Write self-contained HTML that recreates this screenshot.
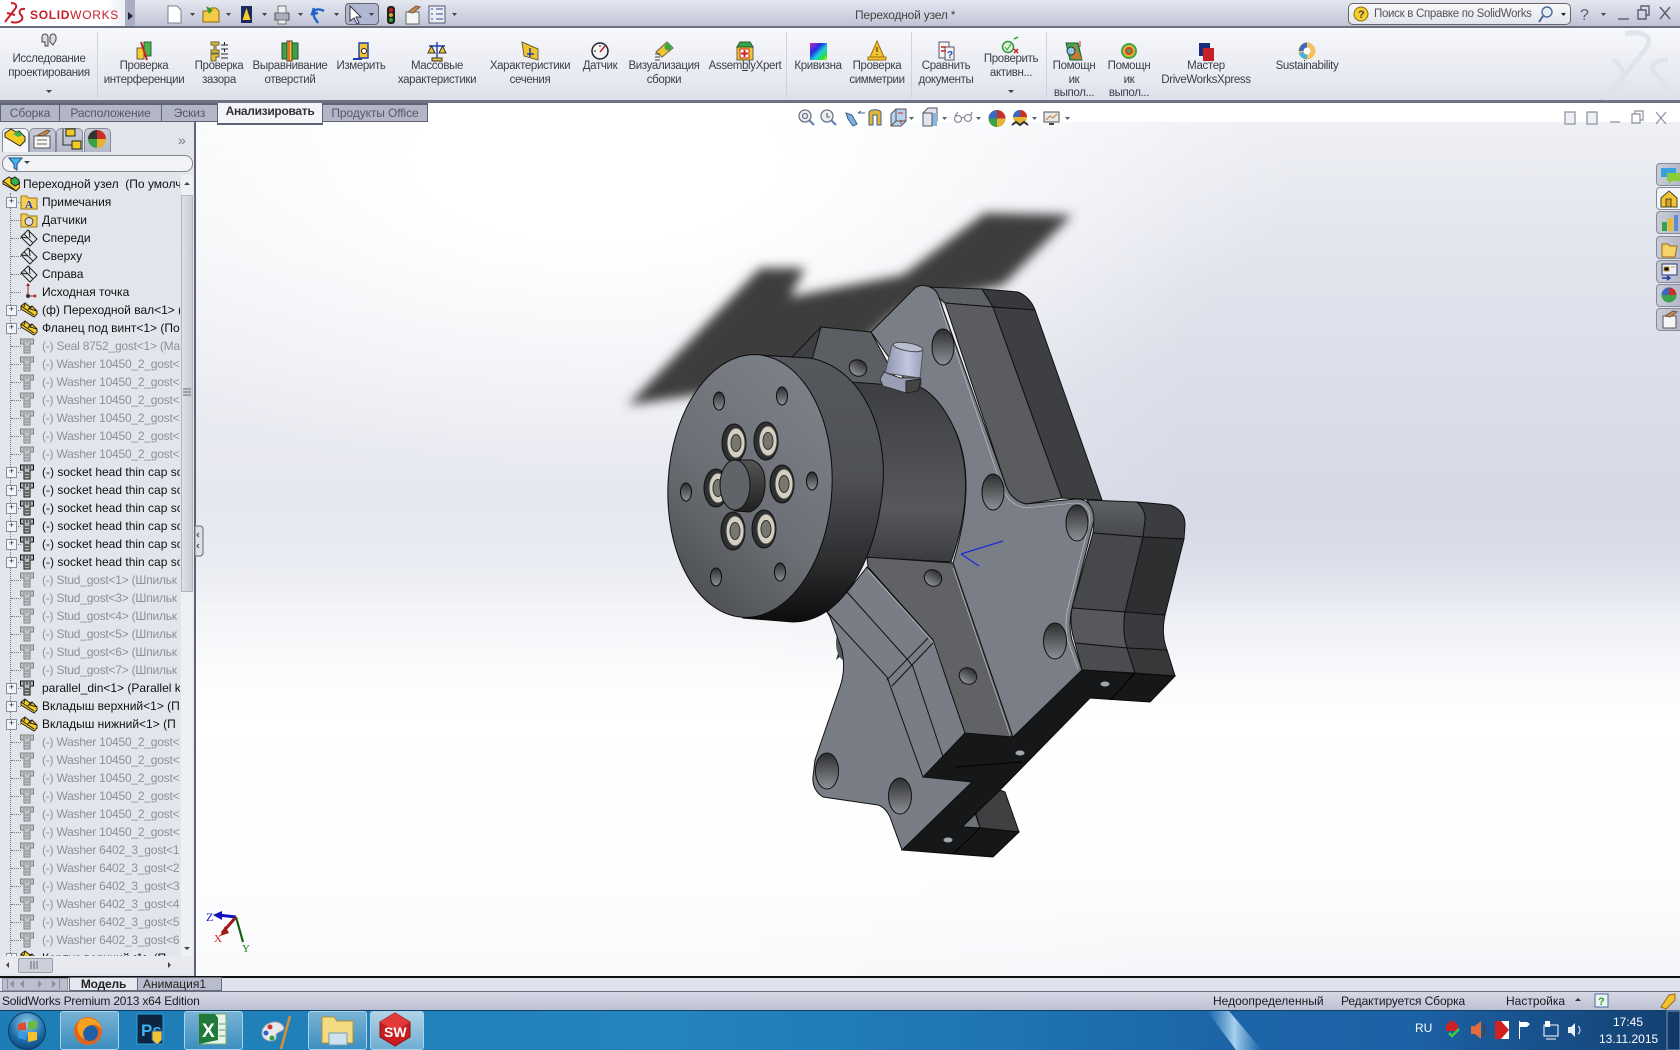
<!DOCTYPE html>
<html><head><meta charset="utf-8"><style>
*{box-sizing:border-box}
html,body{margin:0;padding:0;width:1680px;height:1050px;overflow:hidden;font-family:"Liberation Sans","Noto Sans CJK JP",sans-serif;font-size:12px;background:#fff}
.a{position:absolute}
#title{left:0;top:0;width:1680px;height:28px;background:linear-gradient(#e6e8f1,#c0c4d5);border-bottom:2px solid #6a6f80}
#logo{left:0;top:0;width:125px;height:26px;background:linear-gradient(90deg,#fff 85%,#eceef4)}
#arrowbox{left:125px;top:0;width:10px;height:26px;background:#a9adc4}
#ttl{left:855px;top:8px;font-size:12px;color:#444;white-space:nowrap;letter-spacing:-.2px}
#search{left:1348px;top:3px;width:223px;height:22px;border:1px solid #666;border-radius:5px;background:linear-gradient(#f8f8fb,#e3e5ee)}
#search span{position:absolute;left:25px;top:4px;font-size:11.5px;letter-spacing:-.3px;color:#555;white-space:nowrap}
#rib{left:0;top:28px;width:1680px;height:74px;background:linear-gradient(#f7f8fb,#e7e9f1 70%,#dcdfe9)}
#ribb{left:0;top:100px;width:1680px;height:3px;background:#6e7282}
.l{position:absolute;transform:translateX(-50%);text-align:center;font-size:11.5px;letter-spacing:-.35px;line-height:13.5px;color:#3b3e4c;white-space:nowrap}
.sep{position:absolute;top:32px;height:66px;width:1px;background:#cfd2dd}
.tab{position:absolute;top:103px;height:19px;background:#b3b6c6;border:1px solid #5f6474;border-top:2px solid #5f6474;color:#555964;font-size:12px;letter-spacing:-.1px;text-align:center;line-height:16px;white-space:nowrap}
#vp{left:196px;top:122px;width:1484px;height:854px;background:radial-gradient(ellipse 700px 320px at 400px 40px,rgba(255,255,255,1) 25%,rgba(255,255,255,0) 100%),linear-gradient(90deg,rgba(255,255,255,.4) 0,rgba(255,255,255,.4) 560px,rgba(255,255,255,0) 1000px),linear-gradient(#eef0f5 0,#e0e2ec 163px,#d6d9e6 381px,#dcdfea 440px,#eef0f5 500px,#fbfbfd 560px,#fff 600px,#fdfdfe 760px,#f5f6f9 854px)}
#panel{left:0;top:122px;width:196px;height:854px;background:#e3e5ed;border-right:2px solid #5f6474}
.ptab{position:absolute;top:128px;width:27px;height:24px;background:linear-gradient(#c9ccd8,#b4b8c8);border:1px solid #858a9a;border-bottom:0;border-radius:5px 5px 0 0}
#filter{left:2px;top:155px;width:191px;height:17px;border:1px solid #888;border-radius:8px;background:#f2f3f7}
#tree{left:0;top:175px;width:180px;height:781px;overflow:hidden}
#vl{left:10px;top:193px;height:762px;width:1px;border-left:1px dotted #777}
.r{position:relative;height:18px;line-height:18px;padding-left:42px;white-space:nowrap;overflow:hidden;color:#111;font-size:12px}
.r::before{content:"";position:absolute;left:11px;top:9px;width:10px;border-top:1px dotted #777}
.p::after{content:"+";position:absolute;left:6px;top:4px;width:9px;height:9px;border:1px solid #8a8f9f;background:#f4f5f8;font-size:9px;line-height:7px;text-align:center;color:#223}
.g{color:#8f9094;letter-spacing:-.22px}
.r svg{position:absolute;left:20px;top:0;width:18px;height:18px}
.r.z{padding-left:23px}.r.z::before{display:none}.r.z svg{left:2px}
#vsb{left:181px;top:175px;width:12px;height:781px;background:#eef0f4}
#vth{left:181px;top:195px;width:12px;height:397px;background:linear-gradient(90deg,#e0e2e8,#c9ccd4);border:1px solid #b3b6c0}
#hsb{left:0;top:956px;width:193px;height:18px;background:#e8eaf0}
#hth{left:18px;top:958px;width:35px;height:15px;background:#ccd0da;border:1px solid #999eab;border-radius:2px}
#botab{left:0;top:976px;width:1680px;height:16px;background:#e0e3ec;border-top:2px solid #111;border-bottom:1px solid #6a6f80}
#navb{left:2px;top:978px;width:66px;height:13px;background:#bcbfce;border:1px solid #9699a8}
.bt{position:absolute;top:977px;height:14px;font-size:12px;text-align:center;line-height:13px;color:#222;border:1px solid #666b7c}
#status{left:0;top:992px;width:1680px;height:18px;background:linear-gradient(#d6d9e5,#bcc0d1);color:#1a1a22;font-size:12px;line-height:17px}
#status span{position:absolute;top:1px;white-space:nowrap}
#tb{left:0;top:1010px;width:1680px;height:40px;background:linear-gradient(90deg,#1e7db6 0,#2484bc 40%,#1f74b1 60%,#1c66a8 72%,#1c62a6 84%,#143f70 100%);border-top:1px solid #0e3f68}
.tk{position:absolute;top:1011px;height:39px;border:1px solid #a9d3ea;border-radius:3px;background:linear-gradient(rgba(255,255,255,.4),rgba(255,255,255,.12))}
.w{position:absolute;color:#fff;font-size:12px;white-space:nowrap}
.rt{position:absolute;left:1656px;width:24px;height:23px;background:linear-gradient(90deg,#c9ccd8,#b4b8c8);border:1px solid #868b9a;border-right:0;border-radius:4px 0 0 4px}
</style></head><body>
<div class="a" id="vp"></div>
<div class="a" id="title"></div><div class="a" id="logo"></div><div class="a" id="arrowbox"></div>
<div class="a" style="left:30px;top:9px;color:#c8202a;font-size:12px;line-height:13px;font-weight:bold;letter-spacing:.7px;white-space:nowrap">SOLID<span style="font-weight:normal">WORKS</span></div>
<div class="a" id="ttl">Переходной узел *</div>
<div class="a" id="search"><span>Поиск в Справке по SolidWorks</span></div>
<div class="a" style="left:345px;top:3px;width:34px;height:22px;background:#b1b6d2;border:1px solid #666;border-radius:4px"></div>
<div class="a" id="rib"></div><div class="a" id="ribb"></div>
<div class="sep" style="left:97px"></div><div class="sep" style="left:786px"></div><div class="sep" style="left:911px"></div><div class="sep" style="left:1046px"></div>
<div class="l" style="left:49px;top:53px">Исследование<br>проектирования</div>
<div class="l" style="left:144px;top:60px">Проверка<br>интерференции</div>
<div class="l" style="left:219px;top:60px">Проверка<br>зазора</div>
<div class="l" style="left:290px;top:60px">Выравнивание<br>отверстий</div>
<div class="l" style="left:361px;top:60px">Измерить</div>
<div class="l" style="left:437px;top:60px">Массовые<br>характеристики</div>
<div class="l" style="left:530px;top:60px">Характеристики<br>сечения</div>
<div class="l" style="left:600px;top:60px">Датчик</div>
<div class="l" style="left:664px;top:60px">Визуализация<br>сборки</div>
<div class="l" style="left:745px;top:60px">Assem<u>b</u>lyXpert</div>
<div class="l" style="left:818px;top:60px">Кривизна</div>
<div class="l" style="left:877px;top:60px">Проверка<br>симметрии</div>
<div class="l" style="left:946px;top:60px">Сравнить<br>документы</div>
<div class="l" style="left:1011px;top:53px">Проверить<br>активн...</div>
<div class="l" style="left:1074px;top:60px">Помощн<br>ик<br>выпол...</div>
<div class="l" style="left:1129px;top:60px">Помощн<br>ик<br>выпол...</div>
<div class="l" style="left:1206px;top:60px">Мастер<br>DriveWorksXpress</div>
<div class="l" style="left:1307px;top:60px">Sustainability</div>
<div class="tab" style="left:0;width:60px">Сборка</div>
<div class="tab" style="left:59px;width:103px">Расположение</div>
<div class="tab" style="left:161px;width:57px">Эскиз</div>
<div class="tab" style="left:217px;width:106px;height:22px;background:#f4f5f8;color:#333;font-weight:bold;border-top:0;border-bottom:2px solid #5f6474;letter-spacing:-.3px">Анализировать</div>
<div class="tab" style="left:322px;width:106px">Продукты Office</div>
<div class="a" id="panel"></div>
<div class="ptab" style="left:2px;background:#f4f5f8"></div><div class="ptab" style="left:29px"></div><div class="ptab" style="left:56px"></div><div class="ptab" style="left:84px"></div>
<div class="a" id="filter"></div>
<div class="a" style="left:178px;top:133px;color:#777;font-size:14px;line-height:14px">»</div>
<div class="a" id="vl"></div>
<svg width="0" height="0" style="position:absolute"><defs>
<symbol id="sg" viewBox="0 0 18 18"><path d="M.5 2h13v5H10v9H4V7H.5z" fill="#c2c3c5" stroke="#808184"/><path d="M4 3v3M7 3v3M10 3v3M5 10h4M5 13h4" stroke="#88898c"/></symbol>
<symbol id="sk" viewBox="0 0 18 18"><path d="M.5 2h13v5H10v9H4V7H.5z" fill="#b5b6ba" stroke="#111"/><path d="M4 3v3M7 3v3M10 3v3M5 10h4M5 13h4" stroke="#111"/></symbol>
<symbol id="as" viewBox="0 0 18 18"><path d="M1 5l4-3 5 4 2-1 5 5v3l-3 3L1 8z" fill="#f5cc22" stroke="#222"/><path d="M1 5l13 9M5 2l-1 4M10 6l-2 3M12 5l-2 3 7 2" stroke="#222" fill="none"/></symbol>
<symbol id="rt" viewBox="0 0 18 18"><path d="M1 6l6-4 5 3 3-1 3 4v4l-4 4L1 9z" fill="#f5cc22" stroke="#222"/><path d="M9 4l4-2 4 3v4l-4 2-4-3z" fill="#35b04a" stroke="#222"/><path d="M1 6l12 9" stroke="#222" fill="none"/></symbol>
<symbol id="pl" viewBox="0 0 18 18"><path d="M1 8l7-7 9 9-7 7zM4 5l9 9M1 8l7 1M9 1l1 8" fill="none" stroke="#222"/></symbol>
</defs></svg>
<div class="a" id="tree">
<div class="r z"><svg><use href="#rt"/></svg>Переходной узел&nbsp; (По умолч</div>
<div class="r p"><svg viewBox="0 0 18 18"><path d="M1 3h6l1 2h9v11H1z" fill="#f5cf55" stroke="#9a7a1a"/><text x="5" y="15" font-size="11" font-weight="bold" fill="#1a3fc0" font-family="Liberation Serif">A</text></svg>Примечания</div>
<div class="r"><svg viewBox="0 0 18 18"><path d="M1 3h6l1 2h9v11H1z" fill="#f5cf55" stroke="#9a7a1a"/><circle cx="9" cy="10.500" r="4" fill="#ddd" stroke="#444"/></svg>Датчики</div>
<div class="r"><svg><use href="#pl"/></svg>Спереди</div>
<div class="r"><svg><use href="#pl"/></svg>Сверху</div>
<div class="r"><svg><use href="#pl"/></svg>Справа</div>
<div class="r"><svg viewBox="0 0 18 18"><path d="M8 13V2M8 13h8" stroke="#b01818" fill="none"/><path d="M6 3l2-3 2 3zM14 11l3 2-3 2z" fill="#b01818"/><circle cx="8" cy="13" r="2" fill="#333"/></svg>Исходная точка</div>
<div class="r p"><svg><use href="#as"/></svg>(ф) Переходной вал&lt;1&gt; (</div>
<div class="r p"><svg><use href="#as"/></svg>Фланец под винт&lt;1&gt; (По</div>
<div class="r g"><svg><use href="#sg"/></svg>(-) Seal 8752_gost&lt;1&gt; (Ma</div>
<div class="r g"><svg><use href="#sg"/></svg>(-) Washer 10450_2_gost&lt;3</div>
<div class="r g"><svg><use href="#sg"/></svg>(-) Washer 10450_2_gost&lt;4</div>
<div class="r g"><svg><use href="#sg"/></svg>(-) Washer 10450_2_gost&lt;5</div>
<div class="r g"><svg><use href="#sg"/></svg>(-) Washer 10450_2_gost&lt;6</div>
<div class="r g"><svg><use href="#sg"/></svg>(-) Washer 10450_2_gost&lt;7</div>
<div class="r g"><svg><use href="#sg"/></svg>(-) Washer 10450_2_gost&lt;8</div>
<div class="r p"><svg><use href="#sk"/></svg>(-) socket head thin cap sc</div>
<div class="r p"><svg><use href="#sk"/></svg>(-) socket head thin cap sc</div>
<div class="r p"><svg><use href="#sk"/></svg>(-) socket head thin cap sc</div>
<div class="r p"><svg><use href="#sk"/></svg>(-) socket head thin cap sc</div>
<div class="r p"><svg><use href="#sk"/></svg>(-) socket head thin cap sc</div>
<div class="r p"><svg><use href="#sk"/></svg>(-) socket head thin cap sc</div>
<div class="r g"><svg><use href="#sg"/></svg>(-) Stud_gost&lt;1&gt; (Шпильк</div>
<div class="r g"><svg><use href="#sg"/></svg>(-) Stud_gost&lt;3&gt; (Шпильк</div>
<div class="r g"><svg><use href="#sg"/></svg>(-) Stud_gost&lt;4&gt; (Шпильк</div>
<div class="r g"><svg><use href="#sg"/></svg>(-) Stud_gost&lt;5&gt; (Шпильк</div>
<div class="r g"><svg><use href="#sg"/></svg>(-) Stud_gost&lt;6&gt; (Шпильк</div>
<div class="r g"><svg><use href="#sg"/></svg>(-) Stud_gost&lt;7&gt; (Шпильк</div>
<div class="r p"><svg><use href="#sk"/></svg>parallel_din&lt;1&gt; (Parallel k</div>
<div class="r p"><svg><use href="#as"/></svg>Вкладыш верхний&lt;1&gt; (П</div>
<div class="r p"><svg><use href="#as"/></svg>Вкладыш нижний&lt;1&gt; (П</div>
<div class="r g"><svg><use href="#sg"/></svg>(-) Washer 10450_2_gost&lt;9</div>
<div class="r g"><svg><use href="#sg"/></svg>(-) Washer 10450_2_gost&lt;1</div>
<div class="r g"><svg><use href="#sg"/></svg>(-) Washer 10450_2_gost&lt;1</div>
<div class="r g"><svg><use href="#sg"/></svg>(-) Washer 10450_2_gost&lt;1</div>
<div class="r g"><svg><use href="#sg"/></svg>(-) Washer 10450_2_gost&lt;1</div>
<div class="r g"><svg><use href="#sg"/></svg>(-) Washer 10450_2_gost&lt;1</div>
<div class="r g"><svg><use href="#sg"/></svg>(-) Washer 6402_3_gost&lt;1:</div>
<div class="r g"><svg><use href="#sg"/></svg>(-) Washer 6402_3_gost&lt;2:</div>
<div class="r g"><svg><use href="#sg"/></svg>(-) Washer 6402_3_gost&lt;3:</div>
<div class="r g"><svg><use href="#sg"/></svg>(-) Washer 6402_3_gost&lt;4:</div>
<div class="r g"><svg><use href="#sg"/></svg>(-) Washer 6402_3_gost&lt;5:</div>
<div class="r g"><svg><use href="#sg"/></svg>(-) Washer 6402_3_gost&lt;6:</div>
<div class="r p"><svg><use href="#as"/></svg>Корпус верхний&lt;1&gt; (П</div>
</div>
<div class="a" id="vsb"></div><div class="a" id="vth"></div>
<div class="a" id="hsb"></div><div class="a" id="hth"></div>
<div class="rt" style="top:163px"></div><div class="rt" style="top:187px;background:#f3f4f7"></div><div class="rt" style="top:211px"></div><div class="rt" style="top:236px"></div><div class="rt" style="top:260px"></div><div class="rt" style="top:284px"></div><div class="rt" style="top:308px"></div>
<div class="a" id="botab"></div><div class="a" id="navb"></div>
<div class="bt" style="left:69px;width:69px;background:#e6e8f0;font-weight:bold;letter-spacing:-.2px">Модель</div>
<div class="bt" style="left:137px;width:85px;background:#b9bccc;text-align:left;padding-left:5px">Анимация1</div>
<div class="a" id="status"><span style="left:2px;letter-spacing:-.2px">SolidWorks Premium 2013 x64 Edition</span><span style="left:1213px">Недоопределенный</span><span style="left:1341px;letter-spacing:-.1px">Редактируется Сборка</span><span style="left:1506px">Настройка</span></div>
<div class="a" id="tb"></div>
<div class="tk" style="left:60px;width:59px"></div><div class="tk" style="left:184px;width:59px"></div><div class="tk" style="left:308px;width:59px"></div><div class="tk" style="left:370px;width:54px;background:linear-gradient(rgba(255,255,255,.65),rgba(255,255,255,.35))"></div>
<div class="w" style="left:1415px;top:1021px">RU</div>
<div class="w" style="left:1613px;top:1015px">17:45</div>
<div class="w" style="left:1599px;top:1032px">13.11.2015</div>

<svg class="a" style="left:0;top:0;pointer-events:none" width="1680" height="1050" viewBox="0 0 1680 1050" font-family="Liberation Sans, sans-serif">
<defs>
<filter id="bl" x="-20%" y="-20%" width="140%" height="140%"><feGaussianBlur stdDeviation="5.5"/></filter>
<linearGradient id="hole" x1="0" y1="0" x2="0" y2="1"><stop offset="0" stop-color="#2c2d2f"/><stop offset="1" stop-color="#8d9095"/></linearGradient>
<linearGradient id="cyl" gradientUnits="userSpaceOnUse" x1="0" y1="382" x2="0" y2="562"><stop offset="0" stop-color="#3c3e41"/><stop offset=".7" stop-color="#56585c"/><stop offset="1" stop-color="#3a3c3f"/></linearGradient>
<linearGradient id="fl" gradientUnits="userSpaceOnUse" x1="0" y1="355" x2="0" y2="622"><stop offset="0" stop-color="#55585c"/><stop offset=".45" stop-color="#4f5155"/><stop offset=".75" stop-color="#2f3032"/><stop offset="1" stop-color="#0d0d0e"/></linearGradient>
<linearGradient id="ff" x1=".75" y1=".05" x2=".25" y2="1"><stop offset="0" stop-color="#7c8088"/><stop offset=".55" stop-color="#6c6f75"/><stop offset="1" stop-color="#4c4e51"/></linearGradient>
<linearGradient id="bolt" x1="0" y1="0" x2="1" y2="0"><stop offset="0" stop-color="#8e93ad"/><stop offset=".6" stop-color="#c2c8e0"/><stop offset="1" stop-color="#9a9fb8"/></linearGradient>
<linearGradient id="pin" gradientUnits="userSpaceOnUse" x1="0" y1="460" x2="0" y2="511"><stop offset="0" stop-color="#555"/><stop offset="1" stop-color="#222"/></linearGradient>
<linearGradient id="sw" x1="0" y1="0" x2="1" y2="0"><stop offset="0" stop-color="#7db4e0" stop-opacity="0"/><stop offset=".5" stop-color="#a8d2f0"/><stop offset="1" stop-color="#7db4e0" stop-opacity="0"/></linearGradient>
<radialGradient id="orb" cx=".5" cy=".3" r=".8"><stop offset="0" stop-color="#8fd0ee"/><stop offset=".6" stop-color="#1a6aa8"/><stop offset="1" stop-color="#0c3a68"/></radialGradient>
<linearGradient id="dk" x1="0" y1="0" x2="0" y2="1"><stop offset="0" stop-color="#5e6166"/><stop offset="1" stop-color="#46484b"/></linearGradient>
<g id="sc"><ellipse rx="12" ry="19" fill="#2e2f31" stroke="#111"/><ellipse cx="2" rx="9" ry="15" fill="#d5cfc1" stroke="#444"/><ellipse cx="2" rx="5" ry="8.5" fill="#77776f" stroke="#333"/></g>
</defs>
<!-- shadow -->
<path d="M628 405L760 268L805 268L790 297L903 275L985 213L1072 215L1003 285L900 310L800 400L716 392Z" fill="#3c3c3c" filter="url(#bl)"/>
<!-- back pieces -->
<path d="M848 620L860 640 836 660Z" fill="#333"/>
<path d="M1000 790L1005 792 1019 832 980 828 975 810Z" fill="#3f4042" stroke="#111"/>
<path d="M962 827L975 813 980 828Z" fill="#6e7178" stroke="#111"/>
<!-- upper right blocks -->
<path d="M926 287L982 289 993 307 945 303Z" fill="#5d6065" stroke="#111"/>
<path d="M982 289L1018 292Q1030 297 1035 310L993 307Z" fill="#38393c" stroke="#111"/>
<path d="M945 303L993 307 1062 498 1026 504Q1010 500 1005 483Z" fill="#5a5c60" stroke="#111"/>
<path d="M993 307L1035 310 1102 500 1062 498Z" fill="#3e3f42" stroke="#111"/>
<!-- lower right blocks -->
<path d="M1087 500L1137 502Q1146 510 1145 520L1143 537 1093 533Q1096 515 1087 500Z" fill="url(#dk)" stroke="#111"/>
<path d="M1137 502L1170 505Q1185 510 1185 525L1184 539 1143 537 1145 520Q1146 510 1137 502Z" fill="#3b3c3f" stroke="#111"/>
<path d="M1093 533L1143 537 1125 612 1072 608Z" fill="#46484b" stroke="#111"/>
<path d="M1143 537L1184 539 1165 615 1125 612Z" fill="#2e2f31" stroke="#111"/>
<path d="M1072 608L1125 612Q1122 632 1127 648L1075 643Q1069 625 1072 608Z" fill="#56585c" stroke="#111"/>
<path d="M1125 612L1165 615Q1161 635 1167 650L1127 648Q1122 632 1125 612Z" fill="#3a3b3e" stroke="#111"/>
<path d="M1075 643L1127 648 1135 673 1082 670Z" fill="#4a4c4f" stroke="#111"/>
<path d="M1127 648L1167 650 1175 676 1135 673Z" fill="#37383a" stroke="#111"/>
<!-- black bottom -->
<path d="M1082 670L1175 676 1150 702 1090 698 1000 790 962 827 980 828 1019 832 993 857 953 854 902 850 972 782 923 777 965 733 1013 737Z" fill="#161718" stroke="#0a0a0a"/>
<path d="M1135 673L1110 700M955 767L1022 762M953 854L980 828" stroke="#000" fill="none"/>
<ellipse cx="1105" cy="684" rx="4.5" ry="2.5" fill="#a4a7ab"/><ellipse cx="1020" cy="753" rx="4.5" ry="2.5" fill="#a4a7ab"/><ellipse cx="948" cy="840" rx="4.5" ry="2.5" fill="#a4a7ab"/>
<!-- lower left plate -->
<path d="M846 643m-10 0a10 18 0 1 0 20 0a10 18 0 1 0 -20 0" fill="#55575b"/>
<path d="M827 612L847 592 867 567 933 640 965 733 923 777 972 782 902 850 890 817Q885 807 878 805L823 797Q812 790 813 777L815 760 840 687Q846 670 842 650L830 617Z" fill="#797d85" stroke="#111"/>
<path d="M847 592L908 660 913 667 943 757M827 612L887 677 923 777M887 680L928 638M892 686L933 643" stroke="#111" fill="none"/>
<path d="M868 570L933 642 966 733" stroke="#c8cace" fill="none" stroke-width=".6"/>
<!-- face B -->
<path d="M867 557L953 563 1013 737 965 733 933 640 868 567Z" fill="#606266" stroke="#111"/>
<!-- face C -->
<path d="M821 327L871 332 905 395 850 382 795 360Z" fill="#5b5e63" stroke="#111"/>
<path d="M821 327L792 357 812 360Z" fill="#3f4043" stroke="#111"/>
<!-- face A -->
<path d="M871 332L915 288Q922 283 932 288Q936 290 938 295L1005 483Q1010 500 1026 504L1075 499Q1093 498 1094 520L1072 608Q1068 625 1072 640L1082 670 1013 737 953 563Q978 480 955 430Q940 400 920 387L905 380Z" fill="#7a7e86" stroke="#111"/>
<path d="M938 299L1001 485Q1008 505 1026 508L1075 503Q1090 503 1090 520L1068 608Q1064 625 1068 641L1078 669M953 568L1010 735" stroke="#c8cace" fill="none" stroke-width=".6"/>
<path d="M961 554L1003 541M961 554L979 566" stroke="#1c2bd8" stroke-width="1.2" fill="none"/>
<!-- cylinder -->
<path d="M850 382L920 387Q940 397 955 430Q978 485 951 562L865 557Z" fill="url(#cyl)" stroke="#111"/>
<!-- flange -->
<g stroke="#0a0a0a">
<path d="M757 355L810 358C862 368 890 430 882 495C874 565 840 622 793 622L743 618Z" fill="url(#fl)"/>
<ellipse cx="750" cy="486" rx="82" ry="131.5" transform="rotate(3 750 486)" fill="url(#ff)"/>
<g fill="url(#hole)"><ellipse cx="719" cy="401" rx="5.5" ry="9"/><ellipse cx="782" cy="396" rx="5.5" ry="9"/><ellipse cx="686" cy="492" rx="5.5" ry="9"/><ellipse cx="812" cy="481" rx="5.5" ry="9"/><ellipse cx="716" cy="577" rx="5.5" ry="9"/><ellipse cx="780" cy="572" rx="5.5" ry="9"/></g>
</g>
<use href="#sc" x="734" y="443"/><use href="#sc" x="766" y="441"/><use href="#sc" x="782" y="484"/><use href="#sc" x="716" y="488"/><use href="#sc" x="733" y="531"/><use href="#sc" x="764" y="529"/>
<path d="M735 460L752 460Q766 465 765 486Q764 506 750 512L735 511Z" fill="url(#pin)" stroke="#111"/>
<ellipse cx="735" cy="485" rx="15" ry="25" fill="#606368" stroke="#111"/>
<!-- plate holes -->
<g fill="url(#hole)" stroke="#111">
<ellipse cx="943" cy="347" rx="11" ry="18"/><ellipse cx="993" cy="492" rx="11" ry="18"/><ellipse cx="1077" cy="523" rx="11" ry="18"/><ellipse cx="1055" cy="641" rx="11.5" ry="18"/><ellipse cx="827" cy="771" rx="11.5" ry="18"/><ellipse cx="900" cy="796" rx="11.5" ry="18"/>
<ellipse cx="858" cy="368" rx="9" ry="8" transform="rotate(30 858 368)"/><ellipse cx="933" cy="578" rx="9" ry="8" transform="rotate(30 933 578)"/><ellipse cx="968" cy="676" rx="9" ry="8" transform="rotate(30 968 676)"/>
</g>
<!-- bolt -->
<path d="M892 345L923 351 920 378 885 373Z" fill="url(#bolt)" stroke="#555"/>
<ellipse cx="908" cy="347" rx="15" ry="4" fill="#b9bdd0" stroke="#444" transform="rotate(10 908 347)"/>
<path d="M884 372L900 378 920 378 921 384 918 391 906 393 883 386 880 379Z" fill="#9a9eb2" stroke="#333"/>
<path d="M906 393L918 391 921 379 906 381Z" fill="#444" stroke="#222"/>
<!-- triad -->
<g stroke-width="3" fill="none"><path d="M236 917L218 915" stroke="#1111c0"/><path d="M236 917L222 933" stroke="#a01818"/><path d="M236 917L243 942" stroke="#156015" stroke-width="2.200"/></g>
<path d="M222 911L213 915 222 920Z" fill="#1111c0"/><path d="M225 926L220 936 229 933Z" fill="#a01818"/>
<text x="206" y="921" font-size="12" fill="#1111e0" font-family="Liberation Serif">Z</text><text x="214" y="942" font-size="11" fill="#e01818" font-family="Liberation Serif">X</text><text x="242" y="952" font-size="11" fill="#158015" font-family="Liberation Serif">Y</text>
<!-- DS logo -->
<g fill="none" stroke="#c8202a" stroke-width="2"><path d="M11 3C15 3 18 5 15 9L5 22M7 13L15 15"/><path d="M25 9C20 8 18 12 21 15C25 19 20 24 11 22"/></g>
<path d="M128 12l5 4-5 4z" fill="#223"/>
<!-- DS watermark -->
<g fill="none" stroke="#dfe3ec" stroke-width="5" opacity=".9"><path d="M1625 34C1645 30 1655 38 1645 50L1610 92M1612 60C1630 66 1625 95 1605 98"/><path d="M1668 60C1650 60 1648 70 1660 78C1672 86 1662 100 1640 97"/></g>
<!-- quick toolbar -->
<g id="qat">
<path d="M168 6h9l4 4v13h-13z" fill="#fff" stroke="#7a8090"/>
<path d="M203 11h6l2-3 5 0 3 3v11h-16z" fill="#f4cb45" stroke="#8a6a10"/><path d="M206 6l7 4-4 4" fill="#3a9a2a"/>
<path d="M241 6h11v17h-11z" fill="#1c2a60"/><path d="M246.5 8l4 12h-8z" fill="#f5d020"/>
<path d="M275 13h14v7h-14z" fill="#aab0bb" stroke="#555"/><path d="M278 6h8v7h-8zM278 20h8v4h-8z" fill="#eee" stroke="#777"/>
<path d="M324 11C314 6 311 14 316 20L318 23M314 8l-2 6 6-1" fill="none" stroke="#1c63c8" stroke-width="2.4"/>
<path d="M350 6v15l4-3 3 6 2-1-3-6h5z" fill="#fff" stroke="#334"/>
<rect x="387" y="6" width="8" height="18" rx="3" fill="#222"/><circle cx="391" cy="10" r="2" fill="#c22"/><circle cx="391" cy="15" r="2" fill="#ca2"/><circle cx="391" cy="20" r="2" fill="#2a2"/>
<path d="M406 12h13v12h-13z" fill="#f5f5f5" stroke="#666"/><path d="M408 12l8-6 4 1-7 6z" fill="#c58a4a" stroke="#754"/>
<rect x="429" y="6" width="16" height="17" fill="#e8eef2" stroke="#557"/><path d="M431 9h2M436 9h7M431 14h2M436 14h7M431 19h2M436 19h7" stroke="#348" />
<g fill="#444"><path d="M190 13h5l-2.500 3zM226 13h5l-2.500 3zM262 13h5l-2.500 3zM298 13h5l-2.500 3zM334 13h5l-2.500 3zM369 13h5l-2.500 3zM452 13h5l-2.500 3z"/></g>
</g>
<!-- right title controls -->
<circle cx="1361" cy="14" r="7" fill="#f5d02a" stroke="#8a6a10"/><text x="1358" y="18" font-size="11" font-weight="bold" fill="#444">?</text>
<circle cx="1547" cy="12" r="5" fill="#e9edf4" stroke="#4a6a9a" stroke-width="1.4"/><path d="M1543 16l-4 6" stroke="#4a6a9a" stroke-width="2"/><path d="M1561 13h5l-2.500 3z" fill="#222"/>
<text x="1580" y="20" font-size="16" fill="#5a5f70">?</text><path d="M1601 13h5l-2.500 3z" fill="#444"/>
<g fill="none" stroke="#5a5f70" stroke-width="1.4"><path d="M1618 19h11"/><path d="M1638 10h8v9h-8zM1641 10V6h8v9h-3"/><path d="M1660 7l10 12M1670 7l-10 12"/></g>
<!-- ribbon icons -->
<g transform="translate(49 42)"><path d="M-7-5a3 3 0 0 1 6 0v9h-3v-4h-3zM1-5a3 3 0 0 1 6 0v3l-3 5-3-3z" fill="#ddd" stroke="#444"/></g>
<g transform="translate(144 51)"><path d="M-7-3h7v11h-7z" fill="#f5c930" stroke="#664"/><path d="M0-9h7V5H0z" fill="#4bb14b" stroke="#264"/><path d="M-3-9l6 18" stroke="#d02020" stroke-width="2"/></g>
<g transform="translate(219 51)"><path d="M-8-9h8v3h-3v5h3v3h-8v-3h3v-5h-3zM-8 3h8v3h-3v4h-5z" fill="#e5bb30" stroke="#664"/><path d="M2-6h7M2-2h7M5.500-9v3M5.500-2v3M2 3h7M2 7h7" stroke="#223"/></g>
<g transform="translate(290 51)"><rect x="-8" y="-8" width="16" height="16" fill="#3fa14a" stroke="#253"/><rect x="-3" y="-10" width="5" height="20" fill="#f2c530" stroke="#443"/><path d="M-1-10v20" stroke="#c22"/></g>
<g transform="translate(361 51)"><path d="M-8 7h9v2h-9z" fill="#1c3fa8"/><path d="M-2-8h9v15H-2z" fill="#f2c530" stroke="#1c3fa8" stroke-width="1.4"/><circle cx="3" cy="0" r="2.500" fill="#fff" stroke="#222"/></g>
<g transform="translate(437 51)"><path d="M0-9v18M-8-5H8" stroke="#1c3fa8" stroke-width="1.400"/><path d="M-9 2h7l-3.500-7zM2 2h7L5.500-5z" fill="#f2c530" stroke="#333"/><rect x="-5" y="7" width="10" height="3" fill="#f2c530" stroke="#333"/></g>
<g transform="translate(530 51)"><path d="M-8-9L8-2V9L-6 5z" fill="#f2c530" stroke="#664"/><path d="M0-3V6M-3 3h7" stroke="#1c3fa8" stroke-width="1.500"/></g>
<g transform="translate(600 51)"><circle r="8" fill="#f4f4f4" stroke="#223" stroke-width="1.500"/><path d="M0 1L5-5" stroke="#c22" stroke-width="1.500"/><path d="M-6 0h2M0-6v2" stroke="#222"/></g>
<g transform="translate(664 51)"><path d="M-8 1L3-9 9-3-2 6z" fill="#f2c530" stroke="#664"/><circle cx="4" cy="-4" r="3.500" fill="#35a84a"/><path d="M-9 3h5M-9 6h5M-9 9h5" stroke="#444"/></g>
<g transform="translate(745 51)"><path d="M-8-4h16V9H-8z" fill="#f2c530" stroke="#664"/><path d="M-5-9H5l3 5H-8z" fill="#3aa24a" stroke="#253"/><rect x="-5" y="-2" width="9" height="9" fill="#fff" stroke="#c22"/><path d="M-.500-1v7M-4 2.500h7" stroke="#c22" stroke-width="2"/></g>
<defs><linearGradient id="rb" x1="0" y1="0" x2="1" y2="1"><stop offset="0" stop-color="#d020c0"/><stop offset=".35" stop-color="#2030e0"/><stop offset=".6" stop-color="#20d0e0"/><stop offset=".8" stop-color="#20e040"/><stop offset="1" stop-color="#e0e020"/></linearGradient></defs>
<rect x="810" y="43" width="17" height="17" fill="url(#rb)"/>
<g transform="translate(877 51)"><path d="M0-10L7 6H-7z" fill="#f2c530" stroke="#a07010"/><rect x="-9" y="6" width="18" height="3" fill="#f2c530" stroke="#a07010"/><path d="M0-4v5M0 3v1" stroke="#222"/></g>
<g transform="translate(946 51)"><path d="M-7-9H3v16H-7z" fill="#f4f4f4" stroke="#556"/><path d="M-1-4H8V9H-1z" fill="#f4f4f4" stroke="#556"/><path d="M-5-4h5M-5 0h5" stroke="#c22" stroke-width="1.500"/><text x="1" y="7" font-size="10" font-weight="bold" fill="#1c3fa8">?</text></g>
<g transform="translate(1011 46)"><circle cx="-3" cy="1" r="5.500" fill="#e4f0d8" stroke="#2a9a3a" stroke-width="1.500"/><path d="M-6 1l2 3 4-6" stroke="#2a9a3a" fill="none"/><path d="M3-7l4-2" stroke="#2a9a3a" stroke-width="1.500"/><path d="M3 3l4 4M7 3l-4 4" stroke="#c22" stroke-width="1.500"/></g>
<g transform="translate(1074 51)"><path d="M-8-8L4-8 8 9-4 9z" fill="#4aa64a" stroke="#253"/><path d="M0-7L8 8 -2 8z" fill="#c87a30"/><circle cx="-3" cy="0" r="4" fill="#8ec7e5" stroke="#234"/><path d="M6-10v6" stroke="#c22"/></g>
<g transform="translate(1129 51)"><circle r="8" fill="#3ba64a"/><circle r="6" fill="#e2b530"/><circle r="4" fill="#d04030"/><circle r="2" fill="#4aa64a"/></g>
<rect x="1199" y="43" width="11" height="13" fill="#1a2d7a"/><rect x="1203" y="48" width="11" height="13" fill="#c8202a"/>
<g transform="translate(1307 51)"><circle r="8.500" fill="#f2c060"/><path d="M-8 0A8.500 8.500 0 0 1 0-8.500L0 0z" fill="#3a6ac0"/><path d="M0 8.500A8.500 8.500 0 0 1-8 2L0 0z" fill="#48b0d0"/><circle r="3.500" fill="#fff"/></g>
<g fill="#444"><path d="M46 90h6l-3 3zM1008 90h6l-3 3z"/></g>
<!-- heads-up toolbar -->
<g fill="none" stroke="#6e7684" stroke-width="1.300">
<circle cx="805" cy="116" r="6" fill="#eceef2"/><circle cx="805" cy="116" r="2.500"/><path d="M809 120l5 5" stroke="#5a80b0" stroke-width="2"/>
<circle cx="827" cy="116" r="6" fill="#eceef2"/><path d="M827 113v4h3"/><path d="M831 120l5 5" stroke="#5a80b0" stroke-width="2"/>
</g>
<path d="M846 113l6 2 5 9-4 2-5-7zM858 113h7M858 113l3-2" fill="#7fb3df" stroke="#3a6090"/>
<path d="M869 112c2-3 10-3 12 0v13h-4v-10h-4v10h-4z" fill="#e3b530" stroke="#3a6090"/>
<path d="M891 114l5-5h10v12l-5 5h-10z" fill="#b6d2ee" stroke="#555"/><path d="M896 109v12h10M896 121l-5 5" stroke="#555" fill="none"/><path d="M898 113h5M901 120v4" stroke="#c22"/>
<path d="M923 113l5-5h9v13l-5 5h-9z" fill="#dfe6f0" stroke="#555"/><path d="M932 113h5v13h-5z" fill="#8ab7e2"/><path d="M923 113h9v13" stroke="#555" fill="none"/>
<g fill="none" stroke="#8a8f99" stroke-width="1.300"><circle cx="958" cy="119" r="3.500"/><circle cx="968" cy="118" r="3.500"/><path d="M961 118l4-1M955 116l3-4M971 115l1-3"/></g>
<path d="M997 110a8.500 8.500 0 1 0 .01 0z" fill="#e3b530"/><path d="M997 110a8.500 8.500 0 0 0-8.500 8.500H997z" fill="#3a6ac0"/><path d="M997 110a8.500 8.500 0 0 1 8.500 8.500H997z" fill="#c8302a"/><path d="M988.500 118.500a8.500 8.500 0 0 0 8.500 8.500v-8.500z" fill="#3aa24a"/>
<path d="M1020 110a7 7 0 1 0 .01 0z" fill="#e3b530"/><path d="M1020 110a7 7 0 0 0-7 7h7z" fill="#3a6ac0"/><path d="M1020 110a7 7 0 0 1 7 7h-7z" fill="#c8302a"/><path d="M1012 125l4-3 4 3 4-3 4 3" stroke="#333" stroke-width="2" fill="none"/>
<rect x="1044" y="112" width="15" height="10" fill="#e8e8e8" stroke="#555"/><path d="M1046 120l4-4 3 2 4-4" stroke="#c87a30" fill="none"/><path d="M1049 124h5" stroke="#444" stroke-width="2"/>
<g fill="#5a6070"><path d="M909 117h5l-2.500 3zM942 117h5l-2.500 3zM976 117h5l-2.500 3zM1032 117h5l-2.500 3zM1065 117h5l-2.500 3z"/></g>
<g fill="none" stroke="#8a8f9c" stroke-width="1.200"><rect x="1565" y="112" width="10" height="12" fill="#eef0f4"/><rect x="1587" y="112" width="10" height="12" fill="#eef0f4"/><path d="M1610 122h10M1632 114h8v9h-8zM1635 114v-3h8v9h-3M1656 112l10 12M1666 112l-10 12"/></g>
<!-- panel tab icons -->
<path d="M5 133l6-4 5 3 3-1 6 6v4l-5 5-15-9z" fill="#f2cc25" stroke="#222"/><path d="M13 134l5 3 5-2-5-4z" fill="#3ab54a"/>
<path d="M34 136h16v12H34z" fill="#f5f5f5" stroke="#555"/><path d="M38 135l9-5 3 1-6 5z" fill="#c58a4a" stroke="#754"/><path d="M37 140h10M37 144h10" stroke="#665"/>
<path d="M66 129h9v7h-9zM72 141h9v8h-9z" fill="#f2cc25" stroke="#222"/><path d="M63 129v16h9" stroke="#333" fill="none"/>
<path d="M97 130a9 9 0 1 0 .01 0z" fill="#e3b530"/><path d="M97 130a9 9 0 0 0-9 9h9z" fill="#333"/><path d="M97 130a9 9 0 0 1 9 9h-9z" fill="#c8302a"/><path d="M88 139a9 9 0 0 0 9 9v-9z" fill="#3aa24a"/>
<path d="M9 158h13l-5 6v6l-3-2v-4z" fill="#47b6e8" stroke="#1a4a8a"/><path d="M24 161h6l-3 3z" fill="#444"/>
<!-- scroll arrows -->
<path d="M187 182l-3 3h6zM187 950l-3-3h6zM6 965l3-3v6zM171 965l-3-3v6z" fill="#444"/><path d="M183 389h8M183 392h8M183 395h8M31 961v8M34 961v8M37 961v8" stroke="#667" fill="none"/>
<path d="M195 526h6l2 2v26l-2 2h-6z" fill="#dde0e8" stroke="#666a78"/><path d="M199 533l-2 2 2 2M199 544l-2 2 2 2" stroke="#444" fill="none"/>
<!-- right tabs -->
<path d="M1661 168h15v9h-6l-3 3v-3h-6z" fill="#39a0de"/><path d="M1667 173h13v8h-8l-3 3v-3h-2z" fill="#8acb3a"/>
<path d="M1661 198l8-7 8 7v9h-16z" fill="#f2c530" stroke="#443"/><rect x="1666" y="199" width="5" height="8" fill="#d8a020" stroke="#443"/>
<path d="M1662 222h5v9h-5z" fill="#3aa24a"/><path d="M1668 218h5v13h-5z" fill="#e8bb30"/><path d="M1674 215h4v16h-4z" fill="#5a8ad8"/>
<path d="M1662 244h6l2 2h7l-2 11h-13z" fill="#f5d36a" stroke="#9a6a10"/>
<rect x="1662" y="264" width="15" height="11" fill="#eef" stroke="#336"/><path d="M1664 267h5v4h-5zM1671 267h4" stroke="#c9a020"/><path d="M1662 278h8M1667 276l3 2-3 2" stroke="#1c3fa8" fill="none" stroke-width="1.500"/>
<circle cx="1669" cy="295" r="7.500" fill="#3aa24a"/><path d="M1669 287.500a7.500 7.500 0 0 0-7.500 7.500h7.500z" fill="#3a6ac0"/><path d="M1669 287.500a7.500 7.500 0 0 1 7.500 7.500h-7.500z" fill="#c8302a"/>
<path d="M1663 316h13v12h-13z" fill="#f5f5f5" stroke="#555"/><path d="M1665 316l8-5 4 1-7 5z" fill="#c58a4a" stroke="#754"/>
<!-- bottom nav -->
<g fill="#8d90a0"><path d="M7 979h1v10H7zM14 980l-4 4 4 4zM24 980l-4 4 4 4zM38 980l4 4-4 4zM52 980l4 4-4 4zM59 979h1v10h-1z"/></g>
<!-- status icons -->
<path d="M1575 1001l3-3 3 3z" fill="#333"/>
<rect x="1595" y="994" width="13" height="13" fill="#eef3f7" stroke="#4a6a9a"/><text x="1598" y="1005" font-size="11" font-weight="bold" fill="#2aa02a">?</text>
<path d="M1661 1007l8-12 6-1 0 6-9 9z" fill="#f2c530" stroke="#9a6a10"/>
<!-- taskbar -->
<path d="M1207 1011L1229 1011 1262 1050 1236 1050Z" fill="url(#sw)"/>
<circle cx="27" cy="1031" r="18.500" fill="url(#orb)" stroke="#0c3a60"/>
<path d="M18 1024l8-2v8h-8z" fill="#e64a2e"/><path d="M28 1022l9-2v9h-9z" fill="#6db93f"/><path d="M18 1032h8v8l-8-2z" fill="#3a9adf"/><path d="M28 1032h9v8l-9 2z" fill="#f4c22a"/>
<circle cx="88" cy="1031" r="14" fill="#e2641a"/><circle cx="90" cy="1033" r="8" fill="#1f5fa8"/><path d="M80 1020c10-5 20 0 22 10-3-5-8-6-11-5-7 2-10 8-6 14-8-3-10-13-5-19z" fill="#f5a020"/>
<rect x="137" y="1014" width="26" height="30" fill="#0e2440" stroke="#2aa4e0"/><text x="141" y="1036" font-size="17" font-weight="bold" fill="#3ab4ee">Ps</text><path d="M152 1031h10v9l-5 5-5-5z" fill="#f2c530" stroke="#2b5ea8"/>
<rect x="199" y="1014" width="27" height="30" fill="#e8f3ea" stroke="#7aa870"/><path d="M199 1014h16l3 4v22l-19 4z" fill="#1f7a3c"/><text x="202" y="1037" font-size="19" font-weight="bold" fill="#fff">X</text><path d="M219 1024h6M219 1030h6M219 1036h6" stroke="#5a9a6a"/>
<path d="M262 1033c0-10 16-15 21-7 4 6-8 5-7 10 2 7-14 7-14-3z" fill="#e8e8ec" stroke="#aab"/><circle cx="270" cy="1027" r="2.500" fill="#d03030"/><circle cx="266" cy="1033" r="2.500" fill="#3060d0"/><circle cx="272" cy="1038" r="2.500" fill="#30a040"/><path d="M290 1016l-9 33" stroke="#d89030" stroke-width="2.500"/>
<path d="M322 1017h12l3 4h16v22h-31z" fill="#f4da80" stroke="#b0903a"/><rect x="329" y="1033" width="18" height="12" fill="#cfe2f0" stroke="#7a9ab0"/>
<path d="M380 1022l15-9 15 9v15l-15 9-15-9z" fill="#c81e20" stroke="#901010"/><path d="M395 1013l15 9-15 9-15-9z" fill="#e23a3a"/><text x="384" y="1037" font-size="14" font-weight="bold" fill="#fff">SW</text>
<!-- tray -->
<path d="M1446 1025l6-5 6 5v6h-12z" fill="#c22"/><path d="M1449 1033l3 3 7-7" stroke="#35d045" stroke-width="2.400" fill="none"/>
<path d="M1471 1026h4l6-5v18l-6-5h-4z" fill="#e36a3a"/><path d="M1484 1025v10" stroke="#444" stroke-width="2"/>
<path d="M1495 1021h14v18h-14z" fill="#fff"/><path d="M1495 1021h6l8 9-8 9h-6z" fill="#d02020"/>
<path d="M1519 1021h1v18h-1zM1520 1022h7l3 2-3 3h-7z" fill="#fff"/>
<path d="M1544 1025h14v11h-14z" fill="none" stroke="#fff"/><path d="M1545 1021h5v6h-5z" fill="#fff"/><path d="M1546 1039h10" stroke="#fff"/>
<path d="M1568 1027h3l4-4v14l-4-4h-3z" fill="#e8eef5"/><path d="M1578 1026a5 5 0 0 1 0 8" stroke="#e8eef5" fill="none"/>
<rect x="1667" y="1011" width="13" height="39" fill="#123a66" stroke="#7a9ab8"/>
</svg>
</body></html>
